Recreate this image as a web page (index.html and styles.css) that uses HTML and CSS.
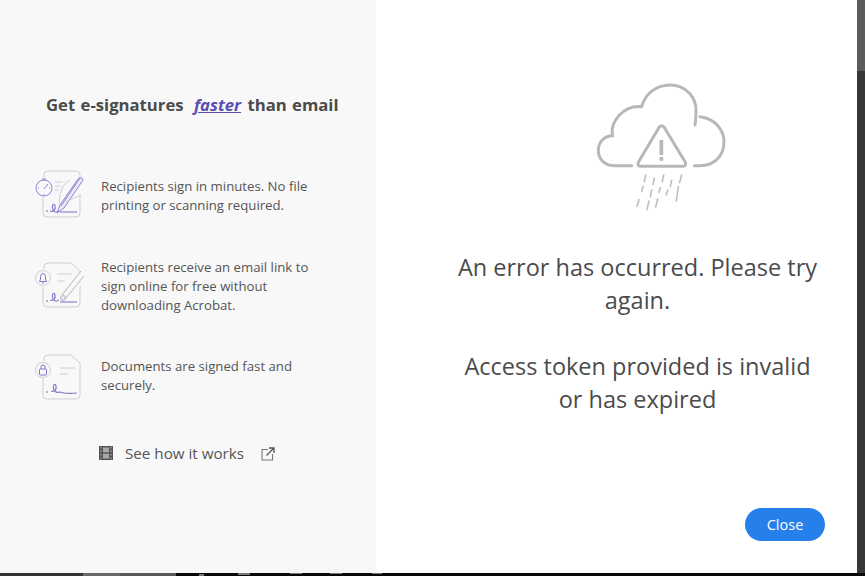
FILE: index.html
```html
<!DOCTYPE html>
<html lang="en">
<head>
<meta charset="utf-8">
<title>Error</title>
<link rel="stylesheet" href="styles.css">
</head>
<body>
<div class="screen">
  <div class="dialog">
    <aside class="promo">
      <h1 class="promo-title">Get e-signatures <a class="faster">faster</a> than email</h1>
      <ul class="benefits">
        <li class="benefit">
          <svg class="benefit-icon" viewBox="0 0 60 60" fill="none">
            <path d="M14 12 V8 Q14 5 18 5 H46 Q50 5 50 9 V12 M50 28 V47 Q50 51 46 51 H17 Q13 51 13 47 V31" stroke="#cfcfd4"/>
            <path d="M25 16 H33 M25 20 H31 M24 24 H29" stroke="#cfcfd4"/>
            <circle cx="14" cy="22" r="8" stroke="#8a84d2" fill="#f8f8f8"/>
            <path d="M12 13 H16 M14 13 V14 M14 23 L18 18 M8 22 H9 M19 22 H20 M14 28 V29" stroke="#8a84d2"/>
            <path d="M27 47 L30 39 L48 13 Q52 10 53 14 L34 42 Z M31 40 L50 12" stroke="#8a84d2" fill="#ebeaf8"/>
            <path d="M40 14 Q30 18 29 38 M36 36 Q44 32 51 29" stroke="#cfcfd4"/>
            <path d="M20 45 C23 46 26 44 25 40 C24 37 22 38 22.500 42 C23 46 26 47 29 45" stroke="#7f78cc" stroke-width="1.200"/>
            <path d="M30 46 H47" stroke="#8a84d2" stroke-width="1.200"/>
            <path d="M16 44 L18 46 M18 44 L16 46" stroke="#999" stroke-width=".7"/>
          </svg>
          <p>Recipients sign in minutes. No file printing or scanning required.</p>
        </li>
        <li class="benefit">
          <svg class="benefit-icon" viewBox="0 0 60 60" fill="none">
            <path d="M14 13 V11 Q14 7 18 7 H41 L50 15 V17 M50 30 V47 Q50 51 46 51 H17 Q13 51 13 47 V31" stroke="#cfcfd4"/>
            <path d="M27 18 H42 M27 25 H35" stroke="#cfcfd4"/>
            <circle cx="13" cy="22" r="7.500" stroke="#cfcfd4" fill="#f8f8f8"/>
            <path d="M9.500 25.500 H16.500 L15.500 23 V20.500 Q15 17.500 13 17.500 Q11 17.500 10.500 20.500 V23 Z M12 27 H14" stroke="#7f78cc"/>
            <path d="M32 39 L51 15 M36 42 L54 20" stroke="#b4b4b8"/>
            <circle cx="33" cy="42" r="2.500" fill="#ececf0" stroke="#b4b4b8"/>
            <path d="M20 44 C23 45 26 43 25 39 C24 36 22 37 22.500 41 C23 45 26 46 29 44" stroke="#7f78cc" stroke-width="1.200"/>
            <path d="M30 46 H47" stroke="#8a84d2" stroke-width="1.200"/>
            <path d="M16 44 L18 46 M18 44 L16 46" stroke="#999" stroke-width=".7"/>
          </svg>
          <p>Recipients receive an email link to sign online for free without downloading Acrobat.</p>
        </li>
        <li class="benefit">
          <svg class="benefit-icon" viewBox="0 0 60 60" fill="none">
            <path d="M14 15 V13 Q14 9 18 9 H41 L50 17 V49 Q50 53 46 53 H17 Q13 53 13 49 V32" stroke="#cfcfd4"/>
            <path d="M30 22 H45 M30 28 H38" stroke="#cfcfd4"/>
            <circle cx="13" cy="24" r="7.500" stroke="#cfcfd4" fill="#f8f8f8"/>
            <rect x="9.500" y="23" width="7" height="6" rx="1" stroke="#7f78cc"/>
            <path d="M11 23 V21 Q11 19 13 19 Q15 19 15 21 V23" stroke="#7f78cc"/>
            <path d="M21 45 C24 46 27 44 26 40 C25 37 23 38 23.500 42 C24 46 27 47 30 46 Q34 48 47 47" stroke="#7f78cc" stroke-width="1.200"/>
            <path d="M16 45 L18 47 M18 45 L16 47" stroke="#999" stroke-width=".7"/>
          </svg>
          <p>Documents are signed fast and securely.</p>
        </li>
      </ul>
      <div class="how">
        <svg class="film" viewBox="0 0 14 14">
          <rect width="14" height="14" fill="#555"/>
          <path d="M4 1.500 H10 V6.300 H4 Z M4 7.700 H10 V12.500 H4 Z" fill="#a8a8a8"/>
          <path d="M1 1 H3 V2.500 H1 Z M11 1 H13 V2.500 H11 Z M1 4.500 H3 V6 H1 Z M11 4.500 H13 V6 H11 Z M1 8 H3 V9.500 H1 Z M11 8 H13 V9.500 H11 Z M1 11.500 H3 V13 H1 Z M11 11.500 H13 V13 H11 Z" fill="#8c8c8c"/>
        </svg>
        <span class="how-text">See how it works</span>
        <svg class="external" viewBox="0 0 14 14" fill="none">
          <path d="M7 2.500 H1 V13 H11.500 V7" stroke="#777" stroke-width="1.100"/>
          <path d="M5.500 8.500 L12.500 1.500 M8 1 H13 V6" stroke="#555" stroke-width="1.300"/>
        </svg>
      </div>
    </aside>
    <main class="panel">
      <svg class="cloud" viewBox="0 0 450 420" fill="none">
        <path d="M140 272 H90 C55 272 40 250 40 225 C40 200 60 182 82 182 C75 140 115 90 170 95 C180 60 210 30 255 30 C305 30 335 70 333 110 C333 125 332 135 330 150 M345 125 C390 130 417 165 417 200 C417 245 385 272 345 272 H328" stroke="#b8b8b8" stroke-width="9" stroke-linecap="round"/>
        <path d="M223 156 Q230 148 237 156 L301 262 Q305 274 294 274 H168 Q156 274 160 262 Z" stroke="#b8b8b8" stroke-width="9" stroke-linejoin="round"/>
        <path d="M229 195 V240" stroke="#b8b8b8" stroke-width="11"/>
        <circle cx="229" cy="252" r="6.500" fill="#b8b8b8"/>
        <path d="M182 300 L178 320 M208 310 L204 328 M236 300 L232 320 M260 316 L256 335 M290 300 L284 322 M174 334 L170 350 M200 345 L196 365 M226 338 L222 352 M248 345 L244 360 M280 335 L274 378 M162 374 L156 394 M192 378 L186 404 M218 372 L212 396" stroke="#c0c0c0" stroke-width="5" stroke-linecap="round"/>
      </svg>
      <p class="message">An error has occurred. Please try again.</p>
      <p class="message detail">Access token provided is invalid or has expired</p>
      <button class="close">Close</button>
    </main>
    <div class="side-strip"><span class="strip-top"></span><span class="strip-rest"></span></div>
  </div>
  <div class="taskbar">
    <span class="tb tb-a"></span><span class="tb tb-b"></span><span class="tb tb-c"></span><span class="tb tb-d"></span>
  </div>
</div>
</body>
</html>
```
FILE: styles.css
```css
* { box-sizing: border-box; }
html, body { margin: 0; padding: 0; height: 100%; overflow: hidden; }
body { font-family: "Open Sans", "Liberation Sans", sans-serif; background: #000; }
.screen { width: 865px; height: 576px; display: flex; flex-direction: column; }
.dialog { height: 573px; display: flex; }
.promo { width: 376px; background: #f8f8f8; display: flex; flex-direction: column; color: #4b4b4b; }
.promo-title { margin: 94px 0 0 46px; font-size: 16.700px; line-height: 22px; font-weight: 700; word-spacing: 1px; white-space: nowrap; color: #4b4b4b; }
.faster { margin: 0 1px 0 5px; color: #5c4db1; font-style: italic; text-decoration: underline; }
.benefits { list-style: none; margin: 55px 0 0; padding: 0 0 0 30px; display: flex; flex-direction: column; gap: 36.500px; }
.benefit { display: flex; align-items: center; gap: 11px; min-height: 50px; }
.benefit-icon { width: 60px; height: 60px; margin: -5px 0; flex: none; }
.benefit p { margin: 0; width: 218px; font-size: 13.200px; line-height: 19px; color: #555; }
.how { display: flex; align-items: center; margin: 42px 0 0 99px; }
.film { width: 14px; height: 14px; flex: none; }
.how-text { margin-left: 12px; font-size: 15.200px; line-height: 20px; color: #555; }
.external { width: 14px; height: 14px; margin: 2px 0 0 17px; flex: none; }
.panel { width: 481px; background: #fff; display: flex; flex-direction: column; align-items: center; position: relative; padding: 75px 0 0 42px; }
.cloud { width: 150px; height: 140px; flex: none; margin-left: 44px; }
.message { margin: 36px 0 0; width: 375px; text-align: center; font-size: 23.500px; line-height: 33px; color: #4b4b4b; }
.detail { margin-top: 33px; }
.close { position: absolute; right: 32px; top: 508px; width: 80px; height: 33px; border: none; border-radius: 17px; background: #2680eb; color: #fff; font: 14.500px "Open Sans", sans-serif; padding: 0; }
.side-strip { width: 8px; display: flex; flex-direction: column; }
.strip-top { height: 71px; background: #5c5c5c; }
.strip-rest { flex: 1; background: #383838; }
.taskbar { height: 3px; display: flex; }
.tb-a { width: 83px; background: #333; }
.tb-b { width: 37px; background: #6a6a6a; }
.tb-c { width: 56px; background: #5a5a5a; }
.tb-d {
  flex: 1;
  background-color: #080808;
  background-image: linear-gradient(#777, #777), linear-gradient(#777, #777), linear-gradient(#777, #777), linear-gradient(#777, #777), linear-gradient(#777, #777);
  background-repeat: no-repeat;
  background-size: 5px 2px, 12px 2px, 12px 1px, 12px 1px, 10px 1px;
  background-position: 23px 1px, 62px 0, 114px 0, 154px 0, 196px 0;
}
```
